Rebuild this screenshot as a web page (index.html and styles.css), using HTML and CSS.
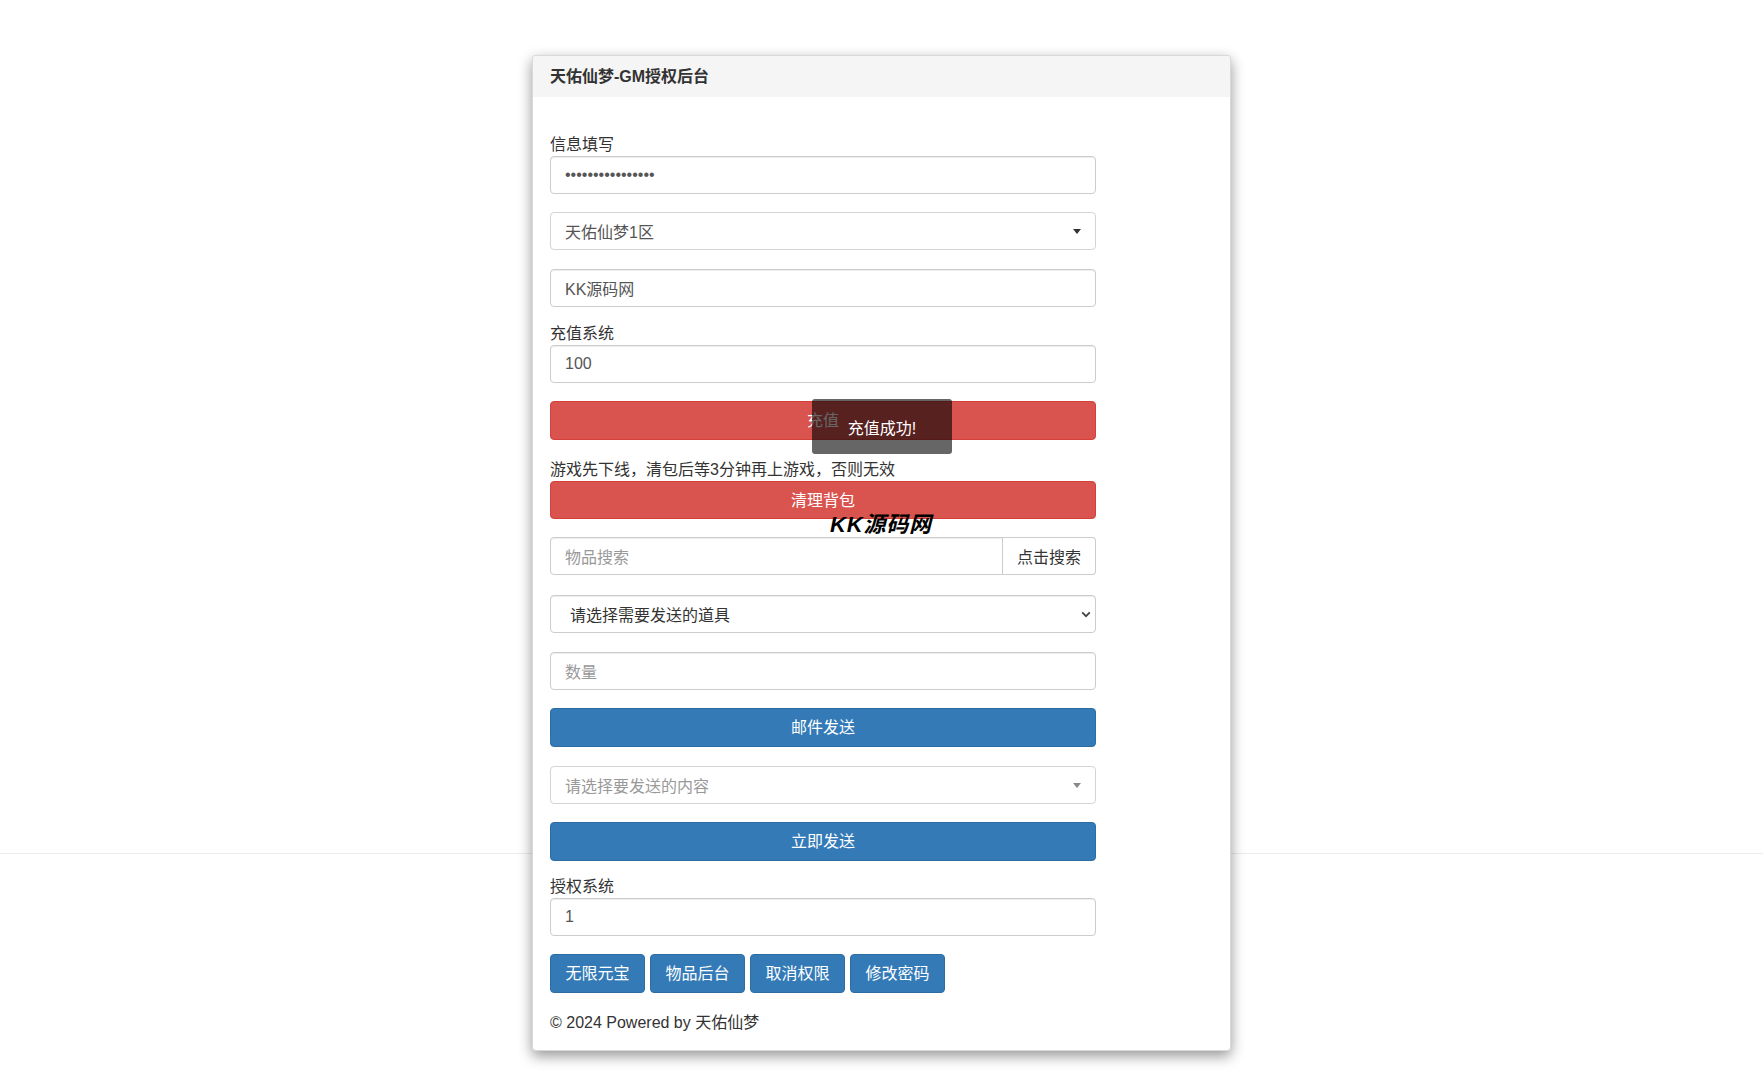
FILE: index.html
```html
<!DOCTYPE html>
<html lang="zh-CN">
<head>
<meta charset="utf-8">
<title>天佑仙梦-GM授权后台</title>
<link rel="stylesheet" href="styles.css">
</head>
<body>
<div class="card">
  <div class="card-head">天佑仙梦-GM授权后台</div>
  <div class="card-body">
    <div class="form">
      <div class="label">信息填写</div>
      <input class="control gap18" type="password" value="1234567890123456">
      <div class="control select2 gap19"><span>天佑仙梦1区</span><i class="caret"></i></div>
      <div class="control gap16"><span>KK源码网</span></div>
      <div class="label">充值系统</div>
      <div class="control gap18"><span>100</span></div>
      <div class="btn btn-red tall gap19">充值</div>
      <div class="label">游戏先下线，清包后等3分钟再上游戏，否则无效</div>
      <div class="btn btn-red gap18">清理背包</div>
      <div class="group gap20">
        <div class="control group-input"><span class="ph">物品搜索</span></div>
        <div class="group-btn">点击搜索</div>
      </div>
      <div class="control native gap19"><span>请选择需要发送的道具</span>
        <svg class="chev" width="10" height="7" viewBox="0 0 10 7"><path d="M1.2 1.4 L5 5.2 L8.8 1.4" fill="none" stroke="#444" stroke-width="1.8"/></svg>
      </div>
      <div class="control gap18"><span class="ph">数量</span></div>
      <div class="btn btn-blue tall gap19">邮件发送</div>
      <div class="control select2 gap18"><span class="ph">请选择要发送的内容</span><i class="caret caret-light"></i></div>
      <div class="btn btn-blue tall gap15">立即发送</div>
      <div class="label">授权系统</div>
      <div class="control gap18"><span>1</span></div>
      <div class="btn-row gap19">
        <div class="btn btn-blue small">无限元宝</div>
        <div class="btn btn-blue small">物品后台</div>
        <div class="btn btn-blue small">取消权限</div>
        <div class="btn btn-blue small">修改密码</div>
      </div>
      <div class="footer">© 2024 Powered by 天佑仙梦</div>
    </div>
  </div>
  <div class="toast">充值成功!</div>
  <div class="watermark">KK源码网</div>
</div>
</body>
</html>
```

FILE: styles.css
```css
html, body {
  margin: 0;
  padding: 0;
}
body {
  background: #fff linear-gradient(#ececec, #ececec) 0 853px / 100% 1px no-repeat;
  min-height: 1086px;
  font-family: "Liberation Sans", "Noto Sans CJK SC", sans-serif;
  font-size: 16px;
  color: #333;
}
.card {
  position: relative;
  box-sizing: border-box;
  width: 699px;
  margin: 55px auto 0;
  background: #fff;
  border: 1px solid rgba(0, 0, 0, 0.15);
  border-radius: 4px;
  box-shadow: 0 5px 14px rgba(0, 0, 0, 0.42);
}
.card-head {
  height: 41px;
  line-height: 41px;
  padding: 0 17px;
  background: #f5f5f5;
  font-weight: bold;
  font-size: 16px;
  color: #333;
  border-radius: 3px 3px 0 0;
}
.card-body {
  padding: 37px 17px 16px;
}
.form {
  width: 546px;
  display: flex;
  flex-direction: column;
}
.label {
  line-height: 22px;
  height: 22px;
  color: #333;
}
.control {
  box-sizing: border-box;
  height: 38px;
  width: 100%;
  border: 1px solid #ccc;
  border-radius: 4px;
  box-shadow: inset 0 1px 1px rgba(0, 0, 0, 0.075);
  padding: 0 14px 1px;
  display: flex;
  align-items: center;
  color: #555;
  font-family: inherit;
  font-size: 16px;
  background: #fff;
  position: relative;
}
input.control {
  outline: none;
  letter-spacing: 0;
  padding-bottom: 0;
}
.ph {
  color: #999;
}
.select2 {
  box-shadow: none;
  border-color: #d4d4d4;
}
.caret {
  position: absolute;
  right: 14px;
  top: 16px;
  width: 0;
  height: 0;
  border-top: 5px solid #333;
  border-left: 4px solid transparent;
  border-right: 4px solid transparent;
}
.caret-light {
  border-top-color: #888;
}
.native {
  padding-left: 19px;
  color: #333;
}
.chev {
  position: absolute;
  right: 4px;
  top: 15px;
}
.btn {
  box-sizing: border-box;
  height: 38px;
  padding-bottom: 3px;
  border-radius: 4px;
  color: #fff;
  font-size: 16px;
  display: flex;
  align-items: center;
  justify-content: center;
  white-space: nowrap;
}
.tall {
  height: 39px;
}
.btn-red {
  background: #d9534f;
  border: 1px solid #d43f3a;
}
.btn-blue {
  background: #337ab7;
  border: 1px solid #2e6da4;
}
.group {
  display: flex;
  height: 38px;
}
.group-input {
  flex: 1;
  border-radius: 4px 0 0 4px;
}
.group-btn {
  box-sizing: border-box;
  width: 93px;
  height: 38px;
  padding-bottom: 1px;
  border: 1px solid #ccc;
  border-left: none;
  border-radius: 0 4px 4px 0;
  display: flex;
  align-items: center;
  justify-content: center;
  color: #333;
  background: #fff;
}
.btn-row {
  display: flex;
  gap: 5px;
  height: 39px;
}
.small {
  width: 95px;
  height: 39px;
}
.footer {
  line-height: 22px;
  color: #333;
}
.gap15 { margin-bottom: 15px; }
.gap16 { margin-bottom: 16px; }
.gap18 { margin-bottom: 18px; }
.gap19 { margin-bottom: 19px; }
.gap20 { margin-bottom: 20px; }
.toast {
  position: absolute;
  left: 279px;
  top: 343px;
  width: 140px;
  height: 55px;
  box-sizing: border-box;
  padding-top: 1px;
  background: rgba(0, 0, 0, 0.6);
  border-radius: 3px;
  color: #fff;
  font-size: 16px;
  display: flex;
  align-items: center;
  justify-content: center;
}
.watermark {
  position: absolute;
  left: 297px;
  top: 456px;
  line-height: 26px;
  font-size: 22px;
  font-weight: bold;
  font-style: italic;
  color: #000;
  letter-spacing: 0.8px;
}
```
